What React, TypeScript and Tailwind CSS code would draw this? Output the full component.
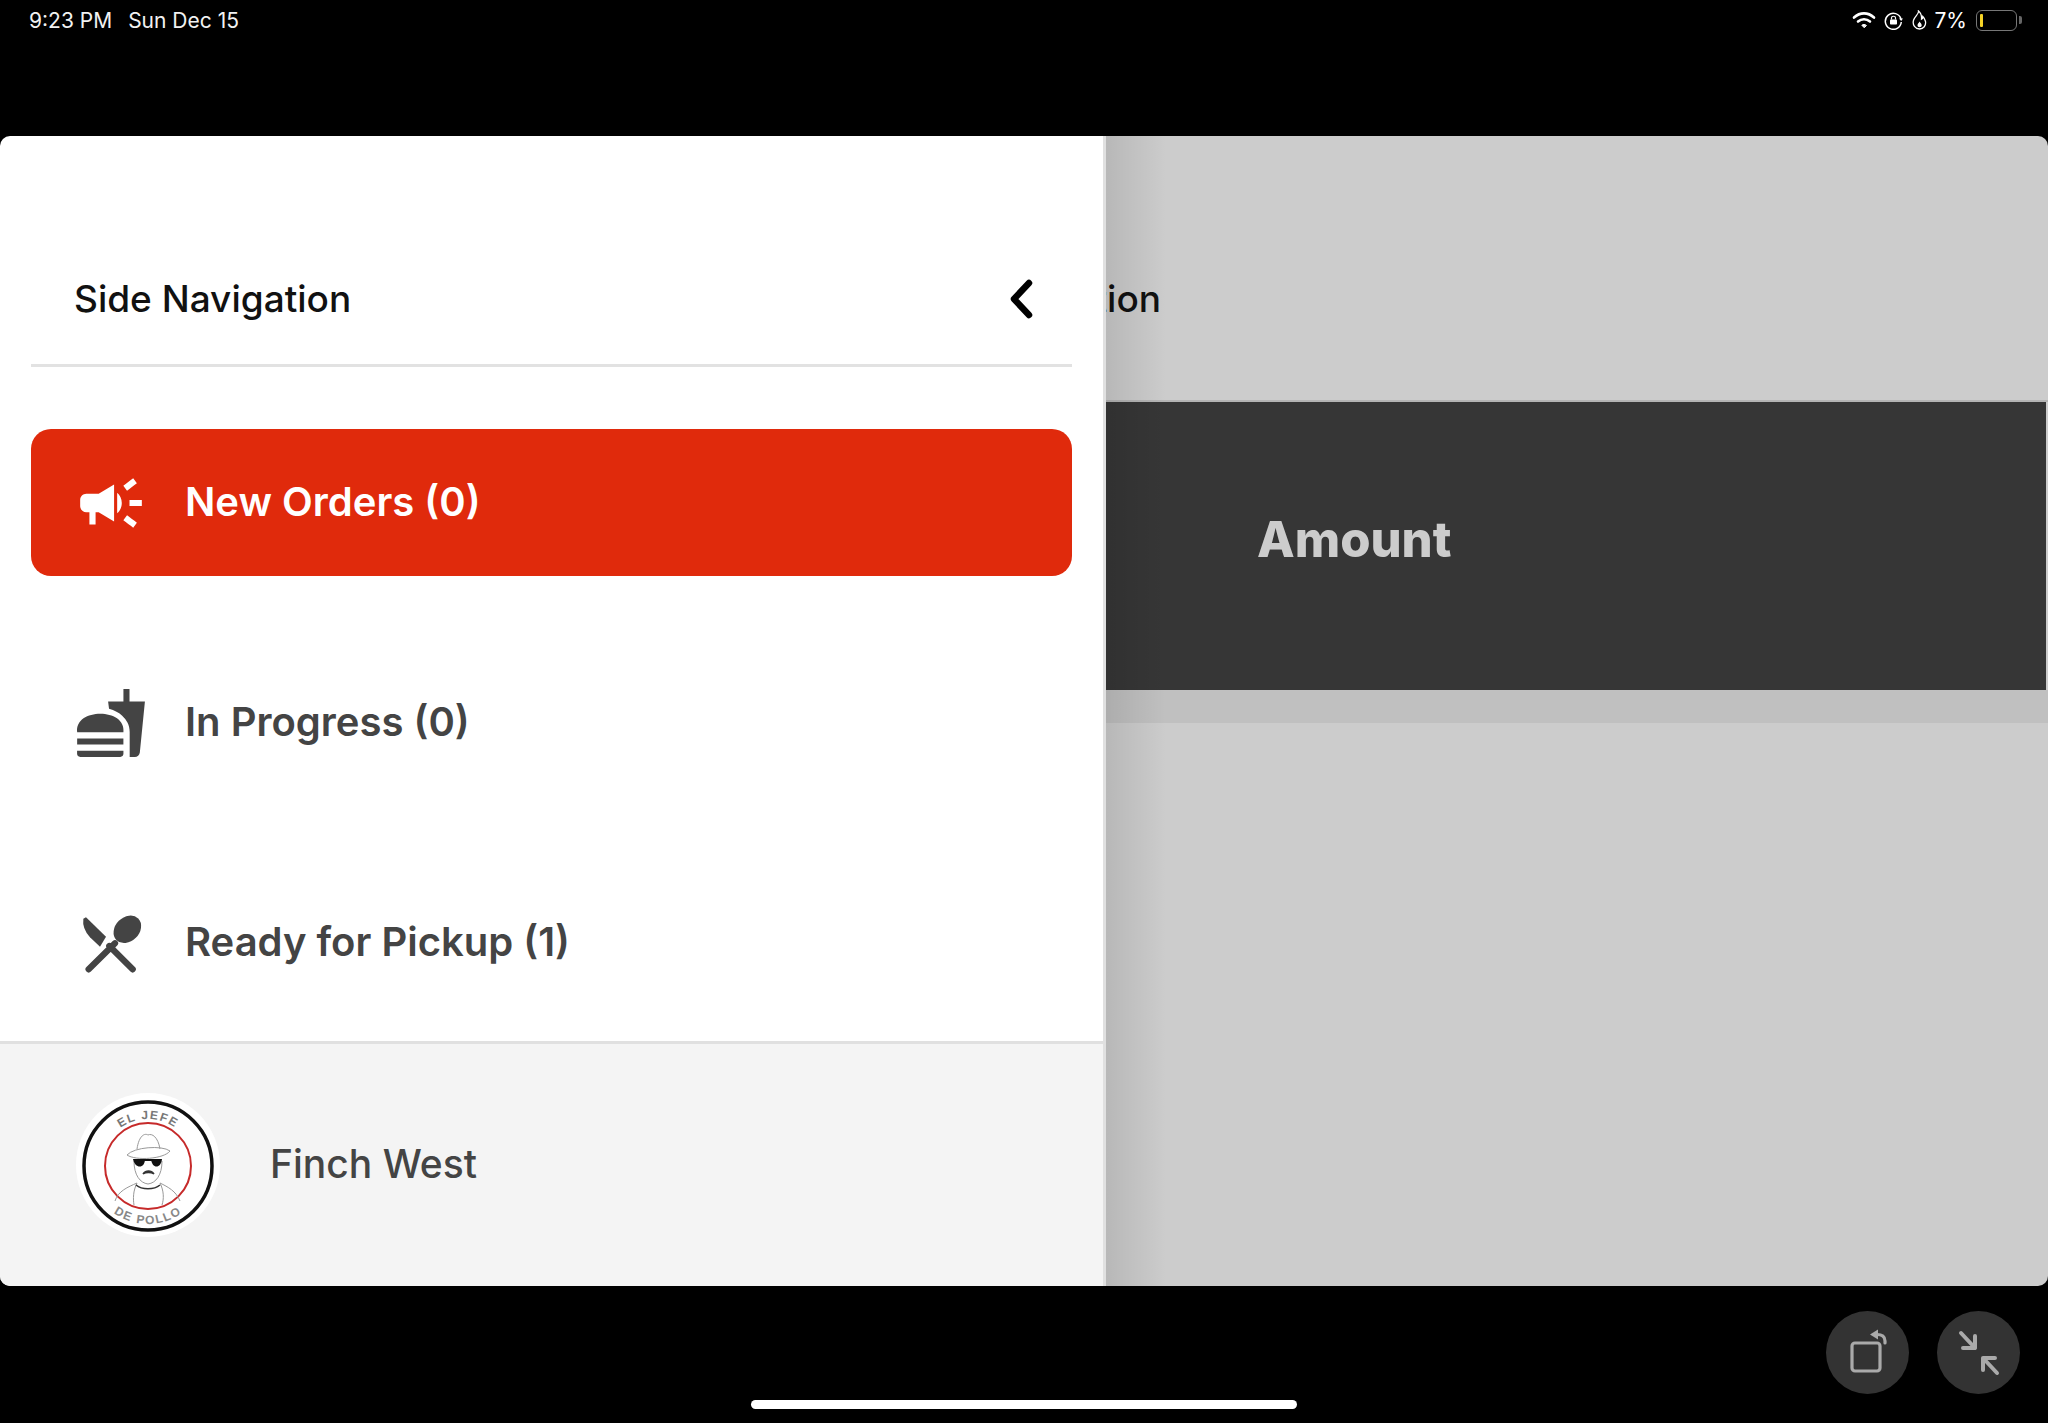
import React from 'react';

const MegaphoneIcon = () => (
    <svg className="w-[74px] h-[74px] shrink-0" viewBox="0 0 24 24" fill="currentColor">
        <path d="M18 11v2h4v-2h-4zm-2 6.61c.96.71 2.21 1.65 3.2 2.39.4-.53.8-1.07 1.2-1.6-.99-.74-2.24-1.68-3.2-2.4-.4.54-.8 1.08-1.2 1.61zM20.4 5.6c-.4-.53-.8-1.07-1.2-1.6-.99.74-2.24 1.68-3.2 2.4.4.53.8 1.07 1.2 1.6.96-.72 2.21-1.65 3.2-2.4zM4 9c-1.1 0-2 .9-2 2v2c0 1.1.9 2 2 2h1v4h2v-4h1l5 3V6L8 9H4zm11.5 3c0-1.33-.58-2.53-1.5-3.35v6.69c.92-.81 1.5-2.01 1.5-3.34z" />
    </svg>
);

const FastfoodIcon = () => (
    <svg className="w-[74px] h-[74px] shrink-0" viewBox="0 0 24 24" fill="currentColor">
        <path d="M18.06 22.99h1.66c.84 0 1.53-.64 1.63-1.46L23 5.05h-5V1h-1.97v4.05h-4.97l.3 2.34c1.71.47 3.31 1.32 4.27 2.26 1.44 1.42 2.43 2.89 2.43 5.29v8.05zM1 21.99V21h15.03v.99c0 .55-.45 1-1.01 1H2.01c-.56 0-1.01-.45-1.01-1zm15.03-7c.5-4-3.5-6-7.5-6s-8 2-7.5 6h15zM1.02 17h15v2h-15z" />
    </svg>
);

const SpoonKnifeIcon = () => (
    <svg className="w-[74px] h-[74px] shrink-0" viewBox="72 48 222 222" fill="currentColor">
        <path d="M100 86 L108 82 L168 140 L150 170 L120 142 Q96 115 100 86 Z" />
        <ellipse cx="232" cy="118" rx="46" ry="36" transform="rotate(-45 232 118)" />
        <path d="M195 160 L116 238 M178 168 L248 238" stroke="currentColor" strokeWidth="19" strokeLinecap="round" fill="none" />
    </svg>
);

const NavItem: React.FC<{ label: string; active?: boolean; icon: React.ReactNode }> = ({ label, active, icon }) => (
    <div className={`h-[147px] flex items-center gap-[37px] px-[43px] rounded-[20px] ${active ? 'bg-[#e02a0c] text-white' : 'text-[#444444]'}`}>
        {icon}
        <span className="pb-[2px] text-[40px] font-semibold whitespace-nowrap">{label}</span>
    </div>
);

const Logo = () => (
    <svg className="w-[144px] h-[144px] shrink-0" viewBox="0 0 144 144">
        <defs>
            <path id="logoTop" d="M 25 73 A 47 47 0 0 1 119 73" />
            <path id="logoBottom" d="M 14 73 A 58 58 0 0 0 130 73" />
        </defs>
        <circle cx="72" cy="72" r="72" fill="#ffffff" />
        <circle cx="72" cy="73" r="64" fill="none" stroke="#111111" strokeWidth="3.5" />
        <circle cx="72" cy="73" r="43" fill="none" stroke="#c62a2a" strokeWidth="2" />
        <text fontSize="12" fontWeight="700" fontFamily="'Liberation Sans', sans-serif" fill="#777777" letterSpacing="1.5" textAnchor="middle">
            <textPath href="#logoTop" startOffset="50%">EL JEFE</textPath>
        </text>
        <text fontSize="12" fontWeight="700" fontFamily="'Liberation Sans', sans-serif" fill="#888888" letterSpacing="1.5" textAnchor="middle">
            <textPath href="#logoBottom" startOffset="50%">DE POLLO</textPath>
        </text>
        <g fill="none" stroke="#999999" strokeWidth="1">
            <path d="M61 56 C63 42 69 40 72 42 C76 40 82 44 84 56" />
            <path d="M51 62 C58 54 86 52 94 58 C88 66 60 68 51 62 Z" />
            <path d="M58 68 C58 82 64 90 72 91 C80 90 86 82 86 68" />
            <path d="M39 108 C42 98 52 94 61 90 M104 108 C100 98 92 94 84 90" />
            <path d="M61 90 C57 98 57 106 58 112 M84 90 C88 98 88 106 86 112" />
            <path d="M60 92 C66 97 78 97 84 92" stroke="#333333" strokeWidth="1.5" />
        </g>
        <path d="M57 66 H69 C69 76 59 76 57 66 Z M75 66 H86 C85 76 76 76 75 66 Z M67 66 H77 V68 H67 Z" fill="#111111" />
        <path d="M67 81 C70 77 75 77 78 81 C75 79 70 79 67 81 Z" fill="#333333" stroke="#333333" strokeWidth="1.5" />
    </svg>
);

const StatusIcons = () => (
    <div className="flex items-center text-white">
        <svg className="w-[24px] h-[18px]" viewBox="0 0 24 18" fill="none" stroke="currentColor" strokeLinecap="round">
            <path d="M2 6.5C8 1 16 1 22 6.5" strokeWidth="2.6" />
            <path d="M6 10.5C9.5 7.5 14.5 7.5 18 10.5" strokeWidth="2.6" />
            <path d="M12 16.5L9.8 14.2C11 13.2 13 13.2 14.2 14.2Z" fill="currentColor" strokeWidth="1" />
        </svg>
        <svg className="w-[19px] h-[19px] ml-[8px]" viewBox="0 0 19 19" fill="none" stroke="currentColor" strokeWidth="1.5">
            <path d="M17 8A8 8 0 1 0 17.3 11" />
            <path d="M15 7.5L17.2 10L19 7.5Z" fill="currentColor" stroke="none" />
            <rect x="6" y="8.5" width="7" height="5" rx="0.8" fill="currentColor" stroke="none" />
            <path d="M7.5 8.5V6.8C7.5 4.7 11.5 4.7 11.5 6.8V8.5" strokeWidth="1.2" />
        </svg>
        <svg className="w-[15px] h-[20px] ml-[9px]" viewBox="0 0 15 20" fill="none" stroke="currentColor" strokeWidth="1.3">
            <path d="M6.5 1C7 4 3 6 1.6 10C0 15 3.5 19 7.5 19C11.5 19 14.2 15.5 13.5 11.5C13 9 11.8 7.5 10.8 6.5C10.8 8 10 9 9.5 9.2C9.8 6 9 3 6.5 1Z" />
            <path d="M7.6 11.5C7 13 5.5 13.5 5.5 15.3C5.5 16.5 6.4 17.3 7.6 17.3C8.8 17.3 9.7 16.5 9.7 15.3C9.7 13.5 8.2 13 7.6 11.5Z" fill="currentColor" stroke="none" />
        </svg>
        <span className="ml-[7px] text-[21px] leading-none">7%</span>
        <div className="ml-[9px] w-[41px] h-[21px] rounded-[6px] border-[1.5px] border-[#777777] p-[3px] flex">
            <div className="w-[3px] rounded-[1px] bg-[#f5d327]" />
        </div>
        <div className="ml-[2px] w-[3px] h-[8px] rounded-r-[2px] bg-[#666666]" />
    </div>
);

export default function App() {
    return (
        <div className="w-[2048px] h-[1423px] bg-black flex flex-col overflow-hidden font-['Inter',sans-serif]">
            {/* Status bar */}
            <div className="h-[136px] shrink-0 pl-[29px] pr-[26px] pt-[9px]">
                <div className="h-[22px] flex items-center justify-between text-[#f2f2f2] text-[21px] leading-none">
                    <div className="flex gap-[16px]">
                        <span>9:23 PM</span>
                        <span>Sun Dec 15</span>
                    </div>
                    <StatusIcons />
                </div>
            </div>

            {/* App window */}
            <div className="h-[1150px] shrink-0 flex rounded-[10px] overflow-hidden">
                {/* Drawer */}
                <div className="w-[1106px] shrink-0 bg-white border-r-[3px] border-[#e0e0e0] flex flex-col">
                    <div className="mx-[31px] pt-[118px] pb-[20px] border-b-[3px] border-[#e2e2e2]">
                        <div className="h-[90px] pl-[43px] pr-[36px] flex items-center justify-between">
                            <span className="text-[37px] font-medium text-[#111111] whitespace-nowrap">Side Navigation</span>
                            <svg className="w-[30px] h-[42px]" viewBox="0 0 30 42" fill="none" stroke="#000000" strokeWidth="6.5" strokeLinecap="round" strokeLinejoin="round">
                                <path d="M23 5L8 21L23 37" />
                            </svg>
                        </div>
                    </div>
                    <div className="flex-1 mx-[31px] mt-[62px] flex flex-col gap-[73px]">
                        <NavItem label="New Orders (0)" active icon={<MegaphoneIcon />} />
                        <NavItem label="In Progress (0)" icon={<FastfoodIcon />} />
                        <NavItem label="Ready for Pickup (1)" icon={<SpoonKnifeIcon />} />
                    </div>
                    <div className="h-[245px] shrink-0 bg-[#f4f4f4] border-t-[3px] border-[#e0e0e0] pl-[76px] flex items-center gap-[50px]">
                        <Logo />
                        <span className="pb-[2px] text-[39px] font-medium text-[#444444]">Finch West</span>
                    </div>
                </div>

                {/* Dimmed page behind the drawer */}
                <div className="relative flex-1 bg-[#cccccc] flex flex-col">
                    <div className="h-[266px] shrink-0 pt-[118px] border-b-[2px] border-[#b4b4b4]">
                        <div className="h-[90px] w-[55px] flex items-center justify-end overflow-hidden">
                            <span className="shrink-0 text-[37px] font-medium text-[#111111] whitespace-nowrap">Side Navigation</span>
                        </div>
                    </div>
                    <div className="h-[288px] shrink-0 mr-[2px] bg-[#363636] pl-[151px] pb-[12px] flex items-center">
                        <span className="text-[49px] font-extrabold text-[#cccccc]">Amount</span>
                    </div>
                    <div className="h-[33px] shrink-0 bg-[#c0c0c0]" />
                    {/* Drawer shadow */}
                    <div className="absolute inset-y-0 left-0 w-[60px] bg-gradient-to-r from-black/10 to-transparent" />
                </div>
            </div>

            {/* Floating buttons and home indicator */}
            <div className="flex-1 flex flex-col">
                <div className="mt-[25px] pr-[28px] flex justify-end gap-[28px]">
                    <div className="w-[83px] h-[83px] rounded-full bg-[#333333] flex items-center justify-center">
                        <svg className="w-[52px] h-[52px]" viewBox="0 0 52 52" fill="none" stroke="#aaaaaa" strokeWidth="3.2" strokeLinejoin="round">
                            <rect x="10" y="16" width="28" height="28" rx="3" />
                            <path d="M43 16V14C43 9.5 40 7.5 35 7.5" strokeLinecap="round" />
                            <path d="M36 2.5V12.5L28 7.5Z" fill="#aaaaaa" stroke="none" />
                        </svg>
                    </div>
                    <div className="w-[83px] h-[83px] rounded-full bg-[#333333] flex items-center justify-center">
                        <svg className="w-[52px] h-[52px]" viewBox="0 0 52 52" fill="none" stroke="#aaaaaa" strokeWidth="4" strokeLinecap="round" strokeLinejoin="round">
                            <path d="M8 6L22 21M22 9V21H10" />
                            <path d="M44 46L30 31M30 43V31H42" />
                        </svg>
                    </div>
                </div>
                <div className="mt-[6px] w-[546px] h-[9px] mx-auto rounded-full bg-white" />
            </div>
        </div>
    );
}
